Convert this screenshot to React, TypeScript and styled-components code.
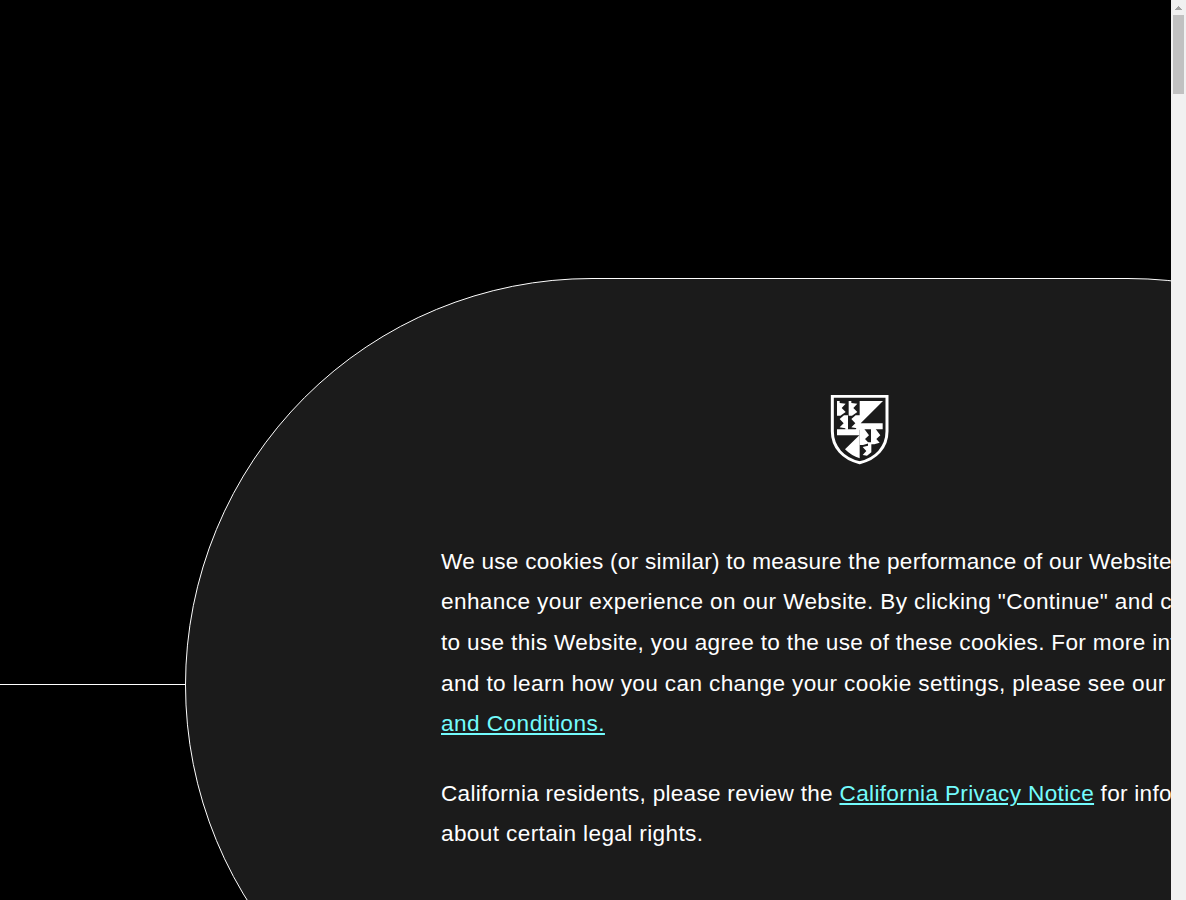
import React from "react";
import styled, { createGlobalStyle } from "styled-components";

const GlobalStyle = createGlobalStyle`
  html, body { margin: 0; background: #000; overflow: hidden; }
  *, *::before { box-sizing: border-box; }
`;

const Page = styled.div`
  display: flex;
  width: 100%;
  height: 900px;
  background: #000;
  overflow: hidden;
`;

const Viewport = styled.main`
  flex: 1;
  min-width: 0;
  display: flex;
  align-items: flex-start;
  padding-top: 278px;
  overflow: hidden;
`;

const Rule = styled.div`
  flex: none;
  width: 185px;
  height: 1px;
  margin-top: 406px;
  background: #fff;
`;

const Panel = styled.section`
  flex: none;
  width: 1350px;
  height: 814px;
  padding: 116px 255px 0;
  border: 1px solid #fff;
  border-radius: 407px;
  background: #1b1b1b;
  display: flex;
  flex-direction: column;
`;

const Crest = styled.svg`
  align-self: center;
  flex: none;
  display: block;
  width: 60px;
  height: 70px;
  margin-bottom: 76.8px;
`;

const Paragraph = styled.p`
  margin: 0 0 29px;
  font-family: "Liberation Sans", Arial, sans-serif;
  font-size: 22.6px;
  line-height: 40.6px;
  color: #fff;
`;

const Line = styled.span<{ $tracking?: number }>`
  display: block;
  white-space: nowrap;
  letter-spacing: ${(p) => p.$tracking ?? 0}px;
`;

const Link = styled.a<{ $tracking?: number }>`
  color: #73fbfd;
  letter-spacing: ${(p) => (p.$tracking === undefined ? "inherit" : `${p.$tracking}px`)};
  text-decoration: underline;
  text-decoration-thickness: 2px;
  text-underline-offset: 2px;
`;

const ScrollTrack = styled.aside`
  flex: none;
  width: 15px;
  display: flex;
  flex-direction: column;
  align-items: center;
  background: #f1f1f1;
`;

const ScrollArrow = styled.svg`
  display: block;
  width: 15px;
  height: 15px;
`;

const ScrollThumb = styled.div`
  width: 11px;
  height: 79px;
  background: #c1c1c1;
`;

const Charges = () => (
  <>
    <path d="M51 48H59V54L77 56L65 69L77 81L61 92H51Z" />
    <path d="M86 48H94V54L112 56L100 69L112 81L96 92H86Z" />
    <path d="M72 91H84V134H76V130L59 127L71 115L59 102Z" />
    <path d="M107 91H120V134H111V130L94 127L106 115L94 102Z" />
  </>
);

export default function App() {
  return (
    <>
      <GlobalStyle />
      <Page>
        <Viewport>
          <Rule />
          <Panel>
            <Crest viewBox="30 30 180 210" fill="#fff">
              <path d="M37 34H201V139C201 187 168 222 119 233C70 222 37 187 37 139Z" fill="none" stroke="#fff" strokeWidth="9" />
              <path d="M119 48H189L122 115H188V133H119V220Q95 213 75 193L118 151H51V133H107L119 115Z" />
              <Charges />
              <path d="M119 132H133L147 151L135 162L147 175L129 180H119Z" />
              <path d="M153 132H167L181 151L169 162L179 173L163 178H153Z" />
              <path d="M144 172H154V202L141 212L128 210L139 198L128 186L144 182Z" />
            </Crest>
            <Paragraph>
              <Line $tracking={0.25}>We use cookies (or similar) to measure the performance of our Website and to</Line>
              <Line $tracking={0.38}>enhance your experience on our Website. By clicking "Continue" and continuing</Line>
              <Line $tracking={0.32}>to use this Website, you agree to the use of these cookies. For more information</Line>
              <Line $tracking={0.37}>and to learn how you can change your cookie settings, please see our <Link>Terms</Link></Line>
              <Line $tracking={0.46}><Link>and Conditions.</Link></Line>
            </Paragraph>
            <Paragraph>
              <Line $tracking={0.26}>California residents, please review the <Link $tracking={0.34}>California Privacy Notice</Link> for information</Line>
              <Line $tracking={0.37}>about certain legal rights.</Line>
            </Paragraph>
          </Panel>
        </Viewport>
        <ScrollTrack>
          <ScrollArrow viewBox="0 0 15 15" shapeRendering="crispEdges">
            <path d="M4 10L7.5 6L11 10Z" fill="#a3a3a3" />
          </ScrollArrow>
          <ScrollThumb />
        </ScrollTrack>
      </Page>
    </>
  );
}
